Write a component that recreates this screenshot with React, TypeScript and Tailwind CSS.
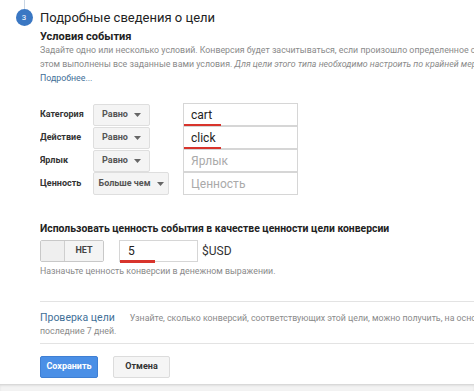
import React from 'react'

interface ConditionRow {
  label: string
  op: string
  opWidth: string
  value: string
  placeholder: string
  marked: boolean
}

const rows: ConditionRow[] = [
  { label: 'Категория', op: 'Равно', opWidth: 'w-[57px]', value: 'cart', placeholder: 'Категория', marked: true },
  { label: 'Действие', op: 'Равно', opWidth: 'w-[57px]', value: 'click', placeholder: 'Действие', marked: true },
  { label: 'Ярлык', op: 'Равно', opWidth: 'w-[57px]', value: '', placeholder: 'Ярлык', marked: false },
  { label: 'Ценность', op: 'Больше чем', opWidth: 'w-[76px]', value: '', placeholder: 'Ценность', marked: false }
]

function Caret() {
  return (
    <svg width="7" height="4" viewBox="0 0 7 4" className="ml-[6px]">
      <path d="M0 0h7L3.5 4z" fill="#666" />
    </svg>
  )
}

export default function App() {
  return (
    <div className="w-[474px] h-[391px] overflow-hidden bg-white font-['Roboto','Liberation_Sans',Arial,sans-serif] flex flex-col">
      <div className="flex flex-1 min-h-0">
        {/* Step gutter */}
        <div className="w-[40px] shrink-0 flex flex-col items-center pl-[8px]">
          <div className="w-px h-[9px] bg-[#c9d6e4]" />
          <div className="w-[17px] h-[17px] rounded-full bg-[#3a77c3] flex items-center justify-center text-white text-[8px] leading-none">
            3
          </div>
        </div>

        {/* Content */}
        <div className="flex-1 min-w-0 overflow-hidden">
          <h2 className="mt-[8px] h-[20px] leading-[20px] text-[13px] text-[#222] whitespace-nowrap">
            Подробные сведения о цели
          </h2>
          <div className="mt-[2px] text-[11px] leading-[13px] font-bold text-[#222]">Условия события</div>
          <div className="text-[8.8px] leading-[14px] text-[#8a8a8a] whitespace-nowrap">
            <div>
              Задайте одно или несколько условий. Конверсия будет засчитываться, если произошло определенное событие и при
            </div>
            <div>
              этом выполнены все заданные вами условия.{' '}
              <span className="italic">Для цели этого типа необходимо настроить по крайней мере одно условие.</span>
            </div>
            <div className="text-[#3f6f98]">Подробнее...</div>
          </div>

          {/* Conditions */}
          <div className="mt-[18px] flex flex-col">
            {rows.map((r, i) => (
              <div key={r.label} className="flex items-center h-[23px]">
                <div className="w-[53px] text-[9px] font-bold text-[#333]">{r.label}</div>
                <div
                  className={`${r.opWidth} ${i === 3 ? 'h-[23px]' : 'h-[22px]'} flex items-center justify-center bg-[#f4f4f4] border border-[#dedede] rounded-[2px] text-[9px] font-bold text-[#555]`}
                >
                  {r.op}
                  <Caret />
                </div>
                <div className={`${i === 3 ? 'ml-[14px]' : 'ml-[33px]'} relative w-[115px] h-[23px] border border-[#d6d6d6] flex items-center pl-[7px] text-[12px]`}>
                  {r.value ? (
                    <span className="text-[#222]">{r.value}</span>
                  ) : (
                    <span className="text-[#aaa]">{r.placeholder}</span>
                  )}
                  {r.marked && <div className="absolute left-0 bottom-[-2px] w-[37px] h-[3px] bg-[#d8342c]" />}
                </div>
              </div>
            ))}
          </div>

          {/* Value */}
          <div className="mt-[27px] text-[10.4px] leading-[13px] font-bold text-[#222] whitespace-nowrap">
            Использовать ценность события в качестве ценности цели конверсии
          </div>
          <div className="mt-[5px] flex items-center h-[22px]">
            <div className="flex h-[22px] border border-[#c8c8c8] rounded-[2px] overflow-hidden">
              <div className="w-[24px] bg-[#efefef] border-r border-[#cfcfcf]" />
              <div className="w-[38px] bg-[#f4f4f4] flex items-center justify-center text-[9px] font-bold text-[#444]">
                НЕТ
              </div>
            </div>
            <div className="ml-[15px] relative w-[79px] h-[22px] border border-[#d6d6d6] flex items-center pl-[8px] text-[12px] text-[#222]">
              5
              <div className="absolute left-0 bottom-[-2px] w-[35px] h-[3px] bg-[#d8342c]" />
            </div>
            <span className="ml-[4px] text-[12px] text-[#333]">$USD</span>
          </div>
          <div className="mt-[3px] text-[8.8px] leading-[12px] text-[#8a8a8a] whitespace-nowrap">
            Назначьте ценность конверсии в денежном выражении.
          </div>

          {/* Verify */}
          <div className="mt-[24px] border-t border-[#e3e3e3] pt-[8px] pb-[5px] whitespace-nowrap">
            <div className="flex items-baseline h-[14px]">
              <span className="text-[10.5px] text-[#3f6f98]">Проверка цели</span>
              <span className="ml-[15px] text-[8.8px] text-[#8a8a8a]">
                Узнайте, сколько конверсий, соответствующих этой цели, можно получить, на основе ваших данных за
              </span>
            </div>
            <div className="text-[8.8px] leading-[14px] text-[#8a8a8a]">последние 7 дней.</div>
          </div>

          {/* Buttons */}
          <div className="border-t border-[#e3e3e3] pt-[12px] flex gap-[15px]">
            <button className="w-[58px] h-[22px] rounded-[2px] bg-[#4a8fe6] border border-[#3f7fd3] text-white text-[9px] font-bold">
              Сохранить
            </button>
            <button className="w-[57px] h-[22px] rounded-[2px] bg-[#f5f5f5] border border-[#dcdcdc] text-[#333] text-[9px] font-bold">
              Отмена
            </button>
          </div>
        </div>
      </div>
      <div className="h-[7px] shrink-0 border-t border-[#d9d9d9] bg-[#f3f3f3] shadow-[inset_0_1px_2px_rgba(0,0,0,0.08)]" />
    </div>
  )
}
